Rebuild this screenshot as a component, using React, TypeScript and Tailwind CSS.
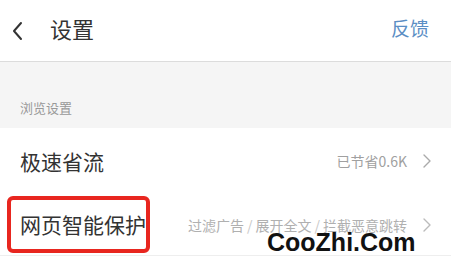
import React from 'react';

const cjk = { fontFamily: '"Noto Sans CJK SC", "Noto Sans", sans-serif' };

function Chevron({ className }: { className?: string }) {
  return (
    <svg width="8" height="14" viewBox="0 0 8 14" className={className} fill="none">
      <path d="M1 1l6 6-6 6" stroke="currentColor" strokeWidth="1.4" strokeLinecap="round" strokeLinejoin="round" />
    </svg>
  );
}

export default function App() {
  return (
    <div className="w-[451px] h-[270px] overflow-hidden bg-white relative" style={cjk}>
      {/* Header */}
      <div className="h-[62px] flex items-center border-b border-[#dcdcdc] bg-white">
        <svg width="12" height="20" viewBox="0 0 12 20" className="ml-[12px] text-[#333]" fill="none">
          <path d="M9 2L2 10l7 8" stroke="currentColor" strokeWidth="2" strokeLinecap="round" strokeLinejoin="round" />
        </svg>
        <span className="ml-[26px] text-[22px] leading-none text-[#333] mt-[-6px]">设置</span>
        <span className="ml-auto mr-[22px] text-[19px] leading-none text-[#5b8ec4] mt-[-6px]">反馈</span>
      </div>

      {/* Section */}
      <div className="h-[66px] bg-[#f5f5f5] flex items-end pb-[14px] pl-[20px]">
        <span className="text-[13px] leading-none text-[#999]">浏览设置</span>
      </div>

      {/* Row 1 */}
      <div className="h-[66px] flex items-center pl-[20px] pr-[20px]">
        <span className="text-[21px] leading-none text-[#333]">极速省流</span>
        <span className="ml-auto text-[14px] leading-none text-[#a0a0a0]">已节省0.6K</span>
        <Chevron className="ml-[16px] text-[#aaa]" />
      </div>

      {/* Row 2 */}
      <div className="h-[62px] flex items-center pr-[20px] border-b border-[#eee]">
        <div className="ml-[7px] h-[57px] w-[143px] border-[4px] border-[#e8261f] rounded-[6px] flex items-center pl-[9px]">
          <span className="text-[21px] leading-none text-[#333] whitespace-nowrap">网页智能保护</span>
        </div>
        <span className="ml-auto text-[14px] leading-none text-[#b0b0b0] whitespace-nowrap flex items-center">
          过滤广告<span className="mx-[3px] text-[#c8c8c8]">/</span>展开全文<span className="mx-[3px] text-[#c8c8c8]">/</span>拦截恶意跳转
        </span>
        <Chevron className="ml-[16px] text-[#bbb]" />
      </div>

      {/* Watermark */}
      <div className="absolute left-[267px] top-[230px] w-[160px] whitespace-nowrap font-['Liberation_Sans',Arial,sans-serif] text-[25px] font-bold leading-none text-[#111]">
        CooZhi.Com
      </div>
    </div>
  );
}
